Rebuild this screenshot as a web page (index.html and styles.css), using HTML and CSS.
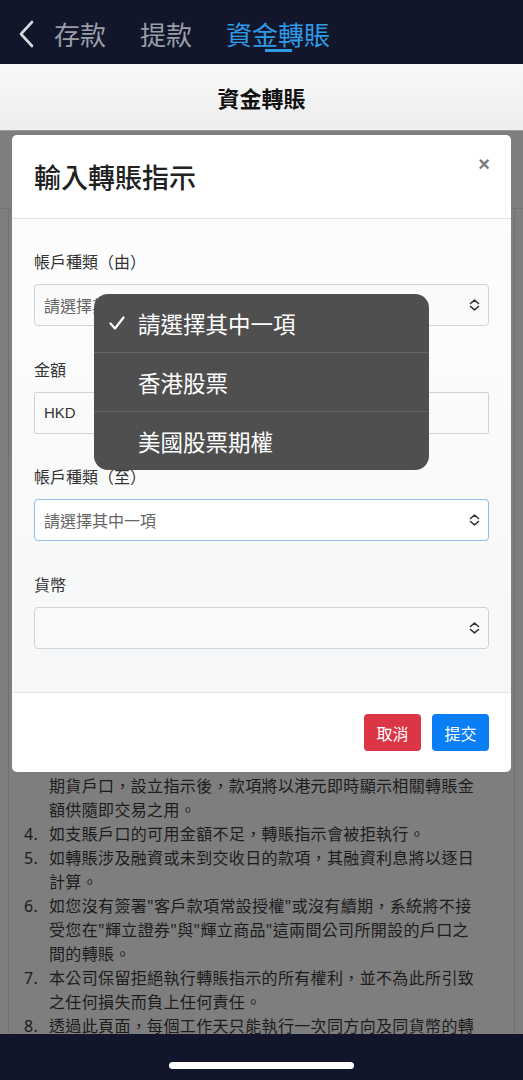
FILE: index.html
```html
<!DOCTYPE html>
<html lang="zh-Hant">

<head>
    <meta charset="UTF-8">
    <meta name="viewport" content="width=device-width, initial-scale=1.0">
    <title>資金轉賬</title>
    <link rel="stylesheet" href="styles.css">
</head>

<body>
    <div class="app">
        <!-- Top tabs -->
        <header class="topbar">
            <svg class="back" width="16" height="28" viewBox="0 0 16 28">
                <path d="M14 2 L3 14 L14 26" />
            </svg>
            <nav class="tabs">
                <span class="tab">存款</span>
                <span class="tab">提款</span>
                <span class="tab active">資金轉賬</span>
            </nav>
        </header>

        <div class="page-title">資金轉賬</div>

        <main class="main">
            <!-- Page content behind the dialog -->
            <div class="bg-section">
                <div class="notes-card">
                    <div class="notes">
                        <div class="note-cont">期貨戶口，設立指示後，款項將以港元即時顯示相關轉賬金<br>額供隨即交易之用。</div>
                        <ol class="note-list">
                            <li><span class="num">4.</span><span class="txt">如支賬戶口的可用金額不足，轉賬指示會被拒執行。</span></li>
                            <li><span class="num">5.</span><span class="txt">如轉賬涉及融資或未到交收日的款項，其融資利息將以逐日計算。</span></li>
                            <li><span class="num">6.</span><span class="txt">如您沒有簽署"客戶款項常設授權"或沒有續期，系統將不接受您在"輝立證券"與"輝立商品"這兩間公司所開設的戶口之間的轉賬。</span></li>
                            <li><span class="num">7.</span><span class="txt">本公司保留拒絕執行轉賬指示的所有權利，並不為此所引致之任何損失而負上任何責任。</span></li>
                            <li><span class="num">8.</span><span class="txt">透過此頁面，每個工作天只能執行一次同方向及同貨幣的轉賬。</span></li>
                        </ol>
                    </div>
                </div>
            </div>

            <!-- Transfer dialog -->
            <div class="modal">
                <div class="modal-header">
                    <h2>輸入轉賬指示</h2>
                    <span class="close">×</span>
                </div>
                <div class="modal-body">
                    <div class="form-group">
                        <label>帳戶種類（由）</label>
                        <div class="select">
                            <span class="placeholder">請選擇其中一項</span>
                            <svg class="chevron" width="11" height="12" viewBox="0 0 11 12">
                                <path d="M1.5 4.5 L5.5 1.2 L9.5 4.5 M1.5 7.5 L5.5 10.8 L9.5 7.5" />
                            </svg>
                        </div>
                    </div>
                    <div class="form-group">
                        <label>金額</label>
                        <div class="input">HKD</div>
                    </div>
                    <div class="form-group">
                        <label>帳戶種類（至）</label>
                        <div class="select focus">
                            <span class="placeholder">請選擇其中一項</span>
                            <svg class="chevron" width="11" height="12" viewBox="0 0 11 12">
                                <path d="M1.5 4.5 L5.5 1.2 L9.5 4.5 M1.5 7.5 L5.5 10.8 L9.5 7.5" />
                            </svg>
                        </div>
                    </div>
                    <div class="form-group">
                        <label>貨幣</label>
                        <div class="select">
                            <span class="placeholder"></span>
                            <svg class="chevron" width="11" height="12" viewBox="0 0 11 12">
                                <path d="M1.5 4.5 L5.5 1.2 L9.5 4.5 M1.5 7.5 L5.5 10.8 L9.5 7.5" />
                            </svg>
                        </div>
                    </div>
                </div>
                <div class="modal-footer">
                    <button class="btn btn-danger">取消</button>
                    <button class="btn btn-primary">提交</button>
                </div>
            </div>

            <!-- Native select picker -->
            <ul class="picker">
                <li class="picked">
                    <svg class="check" width="16" height="14" viewBox="0 0 16 14">
                        <path d="M1.5 7.5 L6 12.5 L14.5 1.5" />
                    </svg>
                    <span>請選擇其中一項</span>
                </li>
                <li><span>香港股票</span></li>
                <li><span>美國股票期權</span></li>
            </ul>
        </main>

        <footer class="homebar">
            <span class="home-indicator"></span>
        </footer>
    </div>
</body>

</html>
```

FILE: styles.css
```css
* {
    box-sizing: border-box;
}

body {
    margin: 0;
    font-family: 'Liberation Sans', 'Noto Sans CJK TC', sans-serif;
    background-color: #11162a;
}

.app {
    width: 523px;
    height: 1080px;
    display: flex;
    flex-direction: column;
    overflow: hidden;
}

/* Top tabs */
.topbar {
    height: 64px;
    flex-shrink: 0;
    background-color: #11162a;
    display: flex;
    align-items: center;
    padding: 4px 0 0 18px;
    gap: 20px;
}

.back path {
    fill: none;
    stroke: #d6d8dd;
    stroke-width: 2.6;
    stroke-linecap: round;
    stroke-linejoin: round;
}

.tabs {
    display: flex;
    gap: 34px;
}

.tab {
    position: relative;
    font-family: 'Noto Sans CJK TC', sans-serif;
    font-size: 26px;
    line-height: 30px;
    color: #9b9ea7;
}

.tab.active {
    color: #2f9be6;
}

.tab.active::after {
    content: '';
    position: absolute;
    left: 50%;
    bottom: -3px;
    width: 27px;
    height: 3px;
    margin-left: -13px;
    background-color: #2f9be6;
}

.page-title {
    height: 67px;
    flex-shrink: 0;
    background: linear-gradient(#f8f8f8, #eeeeee);
    border-bottom: 1px solid #9a9a9a;
    display: flex;
    align-items: center;
    justify-content: center;
    font-family: 'Noto Sans CJK TC', sans-serif;
    font-weight: bold;
    font-size: 22px;
    color: #111;
}

/* Greyed page behind the dialog */
.main {
    flex: 1;
    position: relative;
    overflow: hidden;
    background-color: #7e7e7e;
    padding-top: 77px;
}

.bg-section {
    border-top: 1px solid #727272;
    height: 100%;
}

.notes-card {
    margin: 0 8px;
    height: 100%;
    border-left: 1px solid #717171;
    border-right: 1px solid #717171;
}

.notes {
    padding: 565px 0 0 15px;
    font-family: 'Noto Sans', 'Noto Sans CJK TC', sans-serif;
    font-size: 16px;
    line-height: 24px;
    letter-spacing: 0.35px;
    color: #1c1c1c;
}

.note-cont {
    padding-left: 25px;
}

.note-list {
    list-style: none;
    margin: 0;
    padding: 0;
}

.note-list li {
    display: flex;
}

.num {
    width: 25px;
    flex-shrink: 0;
}

.txt {
    width: 430px;
}

/* Dialog */
.modal {
    position: absolute;
    top: 4px;
    left: 12px;
    right: 12px;
    background-color: #fff;
    border-radius: 5px;
    font-family: 'Noto Sans CJK TC', sans-serif;
}

.modal-header {
    position: relative;
    padding: 24px 22px 23px;
    border-bottom: 1px solid #dee2e6;
}

.modal-header h2 {
    margin: 0;
    font-size: 27px;
    line-height: 36px;
    font-weight: 500;
    color: #212121;
}

.close {
    position: absolute;
    top: 18px;
    right: 21px;
    font-family: 'Liberation Sans', sans-serif;
    font-size: 20px;
    font-weight: bold;
    color: #7a7a7a;
}

.modal-body {
    padding: 30px 22px 43.5px;
    display: flex;
    flex-direction: column;
    gap: 30.5px;
    background: linear-gradient(#fdfdfd, #f6f7f8);
}

.form-group label {
    display: block;
    font-size: 16px;
    line-height: 24px;
    color: #333;
    margin-bottom: 11px;
}

.select,
.input {
    height: 42px;
    border: 1px solid #cfd2d6;
    border-radius: 4px;
    background-color: #fafafa;
    display: flex;
    align-items: center;
    justify-content: space-between;
    padding: 0 8px 0 9px;
    font-size: 16px;
}

.select.focus {
    border-color: #8dbde8;
    background-color: #fff;
}

.input {
    border-radius: 2px;
    color: #333;
    font-family: 'Liberation Sans', sans-serif;
    font-size: 15px;
}

.placeholder {
    color: #666;
}

.chevron path {
    fill: none;
    stroke: #333;
    stroke-width: 1.6;
    stroke-linecap: round;
    stroke-linejoin: round;
}

.modal-footer {
    border-top: 1px solid #dee2e6;
    padding: 21px 22px;
    display: flex;
    justify-content: flex-end;
    gap: 11px;
}

.btn {
    width: 57px;
    height: 37px;
    border: none;
    border-radius: 4px;
    color: #fff;
    font-family: 'Noto Sans CJK TC', sans-serif;
    font-size: 16px;
    padding: 0;
}

.btn-danger {
    background-color: #dc3545;
}

.btn-primary {
    background-color: #0a7ff5;
}

/* Native picker popup */
.picker {
    position: absolute;
    top: 163px;
    left: 94px;
    width: 335px;
    margin: 0;
    padding: 0;
    list-style: none;
    background-color: #4f4f4f;
    border-radius: 14px;
    font-family: 'Noto Sans CJK TC', sans-serif;
    font-size: 22.5px;
    color: #fff;
    overflow: hidden;
}

.picker li {
    height: 58px;
    display: flex;
    align-items: center;
    padding-left: 44px;
}

.picker li + li {
    height: 59px;
    border-top: 1px solid #666;
}

.picker li.picked {
    padding-left: 15px;
}

.check {
    margin-right: 13px;
}

.check path {
    fill: none;
    stroke: #fff;
    stroke-width: 2.2;
    stroke-linecap: round;
    stroke-linejoin: round;
}

/* Home indicator bar */
.homebar {
    height: 46px;
    flex-shrink: 0;
    background-color: #11162a;
    display: flex;
    justify-content: center;
    padding-top: 28px;
}

.home-indicator {
    width: 185px;
    height: 7px;
    border-radius: 4px;
    background-color: #fff;
}
```
